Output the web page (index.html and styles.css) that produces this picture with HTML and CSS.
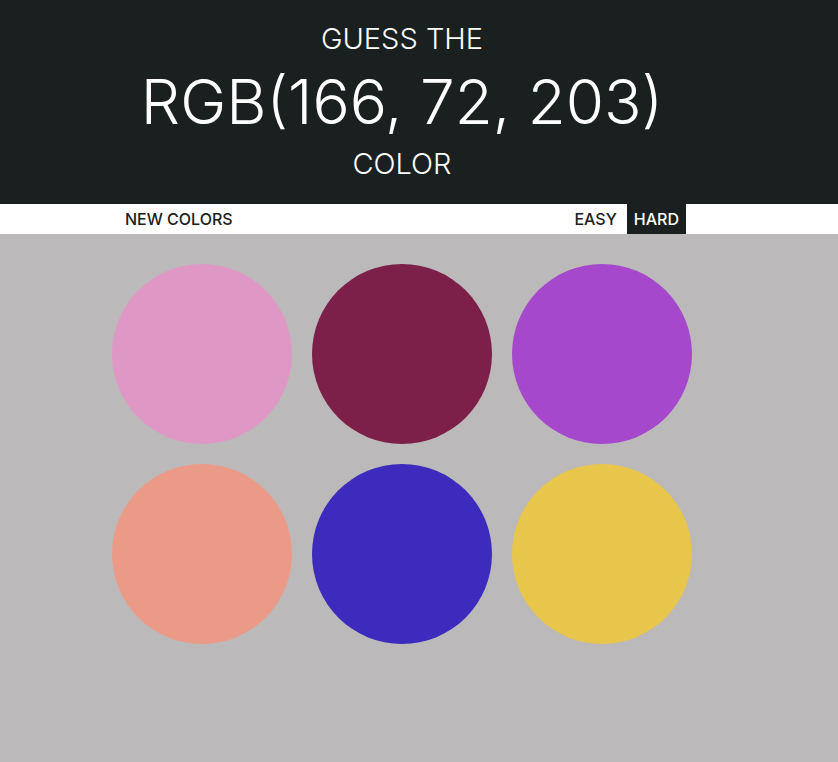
FILE: index.html
```html
<!DOCTYPE html>
<html>
<head>
<meta charset="utf-8">
<link rel="stylesheet" href="styles.css">
</head>
<body>
<header class="header">
  <div class="header-inner">
    <div class="line small">GUESS THE</div>
    <div class="line big">RGB(166, 72, 203)</div>
    <div class="line small">COLOR</div>
  </div>
</header>
<nav class="stripe">
  <div class="stripe-inner">
    <button class="btn">NEW COLORS</button>
    <span class="spacer"></span>
    <button class="btn">EASY</button>
    <button class="btn selected">HARD</button>
  </div>
</nav>
<main class="container">
  <div class="circle" style="background:#df98c6"></div>
  <div class="circle" style="background:#7c2049"></div>
  <div class="circle" style="background:#a648cb"></div>
  <div class="circle" style="background:#ec9a88"></div>
  <div class="circle" style="background:#3c2bbc"></div>
  <div class="circle" style="background:#e8c64b"></div>
</main>
</body>
</html>
```
FILE: styles.css
```css
html, body {
  margin: 0;
  padding: 0;
  background: #bbb9b9;
  height: 100%;
}
.header {
  background: #1a2020;
  color: #fff;
  font-family: "Inter", "Lato", sans-serif;
  font-weight: 300;
  height: 204px;
  box-sizing: border-box;
  padding-top: 21px;
}
.header-inner {
  width: 600px;
  margin-left: 102px;
  text-align: center;
  white-space: nowrap;
}
.line.small {
  font-size: 29px;
  line-height: 36px;
}
.line.big {
  font-size: 62px;
  line-height: 89px;
}
.stripe {
  background: #fff;
  height: 30px;
}
.stripe-inner {
  width: 600px;
  margin-left: 102px;
  display: flex;
  height: 30px;
  padding: 0 16px;
  box-sizing: border-box;
}
.spacer { flex: 1; }
.btn {
  border: none;
  background: #fff;
  color: #1a2020;
  font-family: "Inter", sans-serif;
  font-weight: 500;
  font-size: 16px;
  padding: 0 7px;
  height: 30px;
  margin: 0;
  cursor: pointer;
}
.btn.selected {
  background: #1a2020;
  color: #fff;
  margin-left: 3px;
}
.container {
  width: 600px;
  margin-left: 102px;
  padding-top: 20px;
  display: flex;
  flex-wrap: wrap;
}
.circle {
  width: 180px;
  height: 180px;
  margin: 10px;
  border-radius: 50%;
}
```
